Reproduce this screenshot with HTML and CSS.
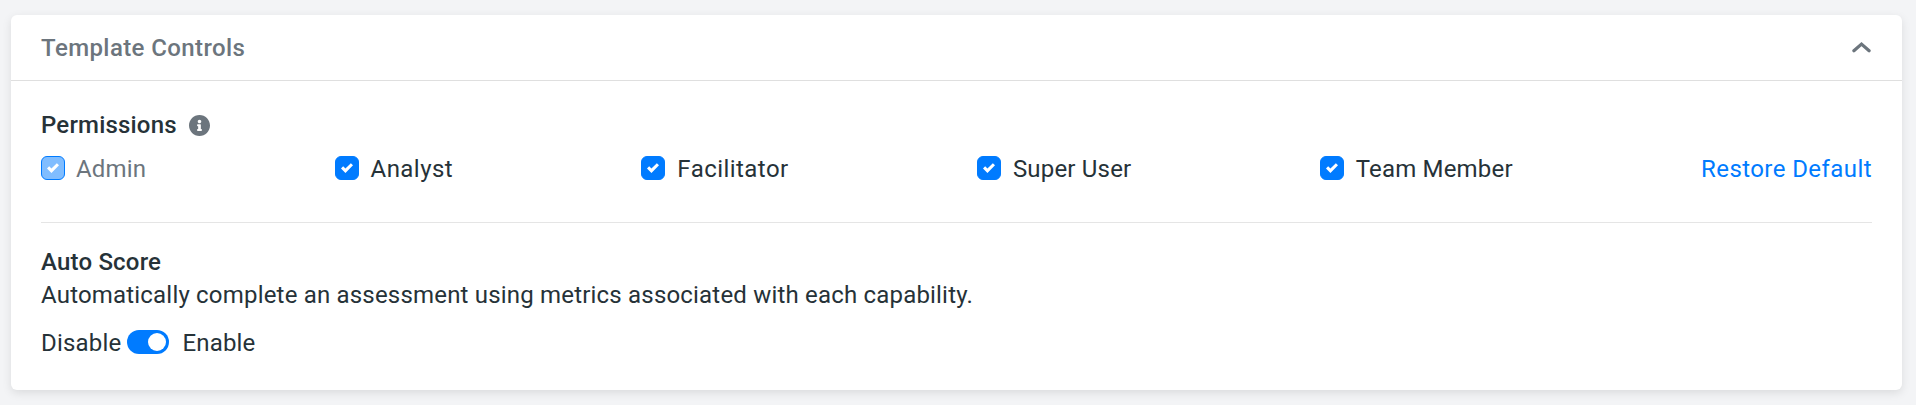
FILE: index.html
```
<!DOCTYPE html>
<html lang="en">
<head>
    <meta charset="UTF-8">
    <meta name="viewport" content="width=device-width, initial-scale=1.0">
    <title>Template Controls</title>
    <link rel="stylesheet" href="styles.css">
</head>
<body>

    <!-- Check icon shared by the permission boxes -->
    <svg class="icon-defs" xmlns="http://www.w3.org/2000/svg">
        <symbol id="check" viewBox="0 0 8 8">
            <path d="M6.564.75l-3.59 3.612-1.538-1.55L0 4.26l2.974 2.99L8 2.193z" />
        </symbol>
    </svg>

    <div class="card">
        <div class="card-header">
            <h2 class="card-title">Template Controls</h2>
            <svg class="chevron" viewBox="0 0 20 15">
                <path d="M1.9 9.8 9.5 3.1 17.1 9.8" />
            </svg>
        </div>

        <div class="card-body">
            <!-- Permissions -->
            <div class="section-title">
                <h3>Permissions</h3>
                <svg class="info" viewBox="8 8 496 496">
                    <path d="M256 8C119.043 8 8 119.083 8 256c0 136.997 111.043 248 248 248s248-111.003 248-248C504 119.083 392.957 8 256 8zm0 110c23.196 0 42 18.804 42 42s-18.804 42-42 42-42-18.804-42-42 18.804-42 42-42zm56 254c0 6.627-5.373 12-12 12h-88c-6.627 0-12-5.373-12-12v-24c0-6.627 5.373-12 12-12h12v-64h-12c-6.627 0-12-5.373-12-12v-24c0-6.627 5.373-12 12-12h64c6.627 0 12 5.373 12 12v100h12c6.627 0 12 5.373 12 12v24z" />
                </svg>
            </div>
            <div class="permissions">
                <div class="permission disabled">
                    <span class="checkbox"><svg><use href="#check" /></svg></span>
                    <span class="label">Admin</span>
                </div>
                <div class="permission">
                    <span class="checkbox"><svg><use href="#check" /></svg></span>
                    <span class="label wide">Analyst</span>
                </div>
                <div class="permission">
                    <span class="checkbox"><svg><use href="#check" /></svg></span>
                    <span class="label wide">Facilitator</span>
                </div>
                <div class="permission">
                    <span class="checkbox"><svg><use href="#check" /></svg></span>
                    <span class="label">Super User</span>
                </div>
                <div class="permission">
                    <span class="checkbox"><svg><use href="#check" /></svg></span>
                    <span class="label">Team Member</span>
                </div>
                <a class="restore" href="#">Restore Default</a>
            </div>

            <hr>

            <!-- Auto Score -->
            <h3>Auto Score</h3>
            <p>Automatically complete an assessment using metrics associated with each capability.</p>
            <div class="switch-row">
                <span>Disable</span>
                <span class="switch"></span>
                <span>Enable</span>
            </div>
        </div>
    </div>

</body>
</html>
```
FILE: styles.css
```
/* --- General --- */
* {
    box-sizing: border-box;
}

body {
    margin: 0;
    padding: 15px 14px 15px 11px;
    background-color: #f3f4f6;
    font-family: Roboto, "Liberation Sans", sans-serif;
    font-size: 24px;
    line-height: 33px;
    letter-spacing: 0.19px;
    color: #263238;
}

h2, h3, p {
    margin: 0;
    font-size: 24px;
}

h3 {
    font-weight: 500;
}

.icon-defs {
    display: none;
}

/* --- Card --- */
.card {
    height: 375px;
    background-color: #fff;
    border-radius: 6px;
    box-shadow: 0 3px 10px rgba(0, 0, 0, 0.1);
}

.card-header {
    display: flex;
    justify-content: space-between;
    align-items: center;
    height: 66px;
    padding: 2px 30px 0;
    border-bottom: 1px solid #dfdfdf;
    color: #6c757d;
}

.card-title {
    font-weight: 500;
    letter-spacing: 0.4px;
}

.chevron {
    width: 20px;
    height: 15px;
}

.chevron path {
    fill: none;
    stroke: #6c757d;
    stroke-width: 3.2;
    stroke-linecap: round;
}

.card-body {
    padding: 28px 30px 30px;
}

.section-title {
    display: flex;
    align-items: center;
    gap: 12px;
}

.info {
    width: 21px;
    height: 21px;
    fill: #6c757d;
}

/* --- Permissions --- */
.permissions {
    display: flex;
    justify-content: space-between;
    margin-top: 11px;
}

.permission {
    display: flex;
    gap: 12px;
}

.label.wide {
    letter-spacing: 0.45px;
}

.checkbox {
    display: flex;
    justify-content: center;
    align-items: center;
    width: 24px;
    height: 24px;
    margin-top: 3px;
    border: 1px solid #007bff;
    border-radius: 6px;
    background-color: #007bff;
}

.checkbox svg {
    width: 12px;
    height: 12px;
    fill: #fff;
}

.permission.disabled {
    gap: 11px;
    color: #6c757d;
}

.disabled .checkbox {
    background-color: #80bdff;
}

.restore {
    color: #007bff;
    letter-spacing: 0.42px;
    text-decoration: none;
}

hr {
    margin: 36px 0 23px;
    border: 0;
    border-top: 1px solid #e5e5e5;
}

/* --- Switch --- */
.switch-row {
    display: flex;
    margin-top: 15px;
}

.switch {
    display: flex;
    justify-content: flex-end;
    width: 42px;
    height: 24px;
    margin: 3px 13px 0 6px;
    padding: 3px;
    border-radius: 12px;
    background-color: #007bff;
}

.switch::after {
    content: "";
    width: 18px;
    height: 18px;
    border-radius: 50%;
    background-color: #fff;
}
```
